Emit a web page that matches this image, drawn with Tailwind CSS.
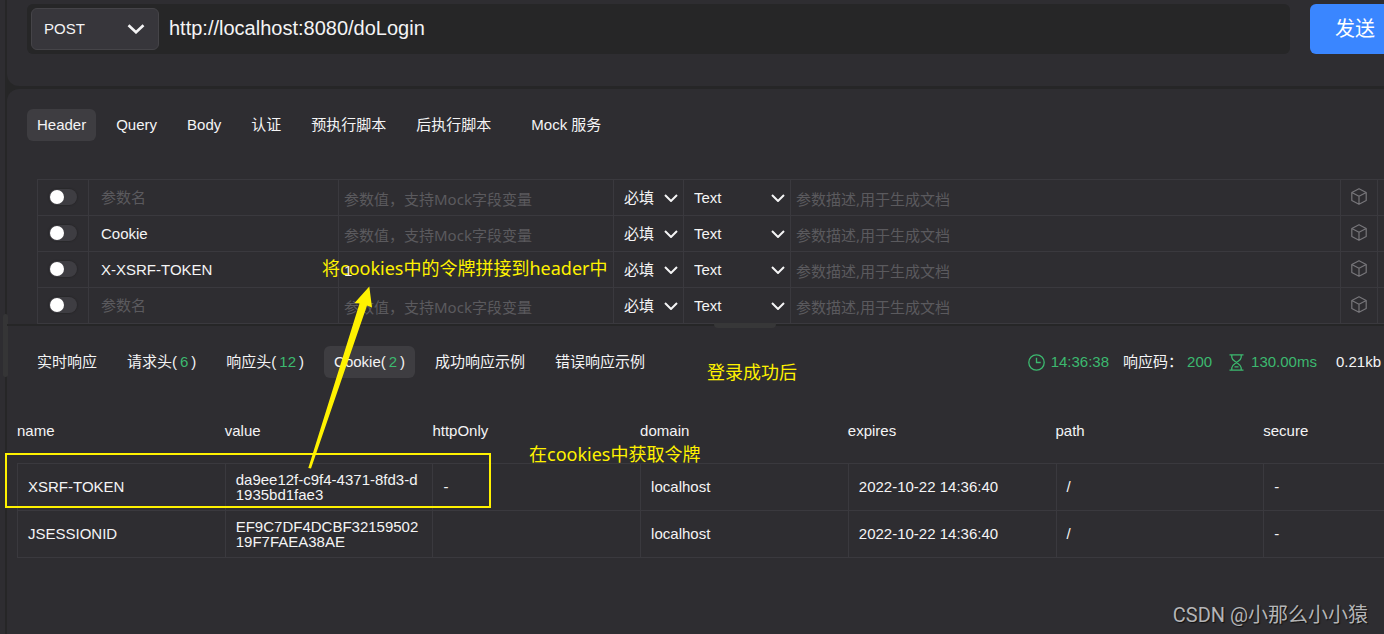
<!DOCTYPE html>
<html lang="zh-CN">
<head>
<meta charset="utf-8">
<meta name="viewport" content="width=device-width, initial-scale=1">
<title>doLogin</title>
<script src="https://cdn.jsdelivr.net/npm/@tailwindcss/browser@4"></script>
</head>
<body class="bg-[#262627] text-[15px] leading-5 text-[#f4f4f5] font-['Liberation_Sans','Noto_Sans_CJK_SC',sans-serif]">
<svg class="hidden" aria-hidden="true">
  <symbol id="chev" viewBox="0 0 14 8"><path d="M1 1l6 6 6-6" fill="none" stroke="currentColor" stroke-width="2"/></symbol>
  <symbol id="cube" viewBox="0 0 16 17"><path d="M8 .7l7.200 3.800v8L8 16.300.8 12.500v-8zM.8 4.500L8 8.200l7.200-3.700M8 8.200v8" fill="none" stroke="currentColor" stroke-width="1.200" stroke-linejoin="round"/></symbol>
</svg>
<div class="relative flex min-h-screen overflow-hidden">
  <div class="w-[5px] shrink-0 bg-[#2e2d31]"></div>
  <div class="absolute left-[3px] top-[314px] h-[63px] w-[5px] rounded-sm bg-[#353536]"></div>
  <div class="ml-[2px] flex min-w-0 flex-1 flex-col gap-[3px]">
    <form class="flex gap-5 rounded-bl-xl bg-[#2e2d31] pt-1 pb-8 pl-5">
      <div class="flex min-w-0 flex-1 rounded-md bg-[#262627] p-1">
        <div class="grid w-32 shrink-0 items-center">
          <select aria-label="请求方法" class="col-start-1 row-start-1 h-[42px] appearance-none rounded-md border border-[#454448] bg-[#37363b] pl-3"><option>POST</option></select>
          <svg class="pointer-events-none col-start-1 row-start-1 mr-[14px] h-[10px] w-[18px] justify-self-end" viewBox="0 0 18 10"><path d="M1.500 1.300L9 8.300l7.500-7" fill="none" stroke="currentColor" stroke-width="2.600"/></svg>
        </div>
        <input aria-label="URL" value="http://localhost:8080/doLogin" class="min-w-0 flex-1 bg-transparent pb-[2px] pl-[10px] text-[20px] outline-none">
      </div>
      <button type="button" class="h-[50px] shrink-0 rounded-l-md bg-[#3a86ff] pr-[9px] pl-[25px] text-[20px] text-white">发送</button>
    </form>

    <main class="flex flex-1 flex-col rounded-tl-xl bg-[#2e2d31]">
      <nav class="flex gap-[10px] px-5 pt-5">
        <button class="h-8 rounded-md bg-[#3e3d41] px-[10px]">Header</button>
        <button class="h-8 px-[10px]">Query</button>
        <button class="h-8 px-[10px]">Body</button>
        <button class="h-8 px-[10px]">认证</button>
        <button class="h-8 px-[10px]">预执行脚本</button>
        <button class="h-8 px-[10px]">后执行脚本</button>
        <button class="ml-[10px] h-8 px-[10px]">Mock 服务</button>
      </nav>

      <div class="mt-[38px] pl-[30px]">
        <table class="w-full table-fixed border-separate border-spacing-0 border-b border-[#3a393e]">
          <colgroup><col class="w-[51px]"><col class="w-[250px]"><col class="w-[275px]"><col class="w-[70px]"><col class="w-[107px]"><col><col class="w-[37px]"><col class="w-[7px]"></colgroup>
          <tbody class="[&_td]:h-9 [&_td]:border-t [&_td]:border-l [&_td]:border-[#3a393e] [&_td]:p-0">
            <tr>
              <td><input type="checkbox" aria-label="启用参数 1" class="mb-[2px] ml-[11px] block h-4 w-7 appearance-none rounded-full bg-[#3e3d42] p-px shadow-[0_0_1px_1px_#29282b] before:block before:size-[14px] before:rounded-full before:bg-white"></td>
              <td><input aria-label="参数名 1" placeholder="参数名" class="block w-full bg-transparent pl-3 outline-none placeholder:text-[#5b5a5e]"></td>
              <td><input aria-label="参数值 1" placeholder="参数值，支持Mock字段变量" class="block w-full bg-transparent pt-[2px] pl-[5px] font-['Noto_Sans','Noto_Sans_CJK_SC',sans-serif] outline-none placeholder:text-[#5b5a5e]"></td>
              <td><div class="grid items-center"><select aria-label="必填 1" class="col-start-1 row-start-1 appearance-none pl-[10px]"><option>必填</option></select><svg class="pointer-events-none col-start-1 row-start-1 mr-[5px] h-2 w-[14px] justify-self-end"><use href="#chev"/></svg></div></td>
              <td><div class="grid items-center"><select aria-label="类型 1" class="col-start-1 row-start-1 appearance-none pl-[10px]"><option>Text</option></select><svg class="pointer-events-none col-start-1 row-start-1 mr-[5px] h-2 w-[14px] justify-self-end"><use href="#chev"/></svg></div></td>
              <td><input aria-label="参数描述 1" placeholder="参数描述,用于生成文档" class="block w-full bg-transparent pt-[2px] pl-[5px] font-['Noto_Sans','Noto_Sans_CJK_SC',sans-serif] outline-none placeholder:text-[#5b5a5e]"></td>
              <td><button aria-label="Mock 1" class="mx-auto mb-[3px] block text-[#77767a]"><svg class="h-[17px] w-4"><use href="#cube"/></svg></button></td>
              <td></td>
            </tr>
            <tr>
              <td><input type="checkbox" aria-label="启用参数 2" class="mb-[2px] ml-[11px] block h-4 w-7 appearance-none rounded-full bg-[#3e3d42] p-px shadow-[0_0_1px_1px_#29282b] before:block before:size-[14px] before:rounded-full before:bg-white"></td>
              <td><input aria-label="参数名 2" value="Cookie" placeholder="参数名" class="block w-full bg-transparent pl-3 outline-none placeholder:text-[#5b5a5e]"></td>
              <td><input aria-label="参数值 2" placeholder="参数值，支持Mock字段变量" class="block w-full bg-transparent pt-[2px] pl-[5px] font-['Noto_Sans','Noto_Sans_CJK_SC',sans-serif] outline-none placeholder:text-[#5b5a5e]"></td>
              <td><div class="grid items-center"><select aria-label="必填 2" class="col-start-1 row-start-1 appearance-none pl-[10px]"><option>必填</option></select><svg class="pointer-events-none col-start-1 row-start-1 mr-[5px] h-2 w-[14px] justify-self-end"><use href="#chev"/></svg></div></td>
              <td><div class="grid items-center"><select aria-label="类型 2" class="col-start-1 row-start-1 appearance-none pl-[10px]"><option>Text</option></select><svg class="pointer-events-none col-start-1 row-start-1 mr-[5px] h-2 w-[14px] justify-self-end"><use href="#chev"/></svg></div></td>
              <td><input aria-label="参数描述 2" placeholder="参数描述,用于生成文档" class="block w-full bg-transparent pt-[2px] pl-[5px] font-['Noto_Sans','Noto_Sans_CJK_SC',sans-serif] outline-none placeholder:text-[#5b5a5e]"></td>
              <td><button aria-label="Mock 2" class="mx-auto mb-[3px] block text-[#77767a]"><svg class="h-[17px] w-4"><use href="#cube"/></svg></button></td>
              <td></td>
            </tr>
            <tr>
              <td><input type="checkbox" aria-label="启用参数 3" class="mb-[2px] ml-[11px] block h-4 w-7 appearance-none rounded-full bg-[#3e3d42] p-px shadow-[0_0_1px_1px_#29282b] before:block before:size-[14px] before:rounded-full before:bg-white"></td>
              <td><input aria-label="参数名 3" value="X-XSRF-TOKEN" placeholder="参数名" class="block w-full bg-transparent pl-3 outline-none placeholder:text-[#5b5a5e]"></td>
              <td><input aria-label="参数值 3" value="1" placeholder="参数值，支持Mock字段变量" class="block w-full bg-transparent pt-[2px] pl-[5px] outline-none placeholder:text-[#5b5a5e]"></td>
              <td><div class="grid items-center"><select aria-label="必填 3" class="col-start-1 row-start-1 appearance-none pl-[10px]"><option>必填</option></select><svg class="pointer-events-none col-start-1 row-start-1 mr-[5px] h-2 w-[14px] justify-self-end"><use href="#chev"/></svg></div></td>
              <td><div class="grid items-center"><select aria-label="类型 3" class="col-start-1 row-start-1 appearance-none pl-[10px]"><option>Text</option></select><svg class="pointer-events-none col-start-1 row-start-1 mr-[5px] h-2 w-[14px] justify-self-end"><use href="#chev"/></svg></div></td>
              <td><input aria-label="参数描述 3" placeholder="参数描述,用于生成文档" class="block w-full bg-transparent pt-[2px] pl-[5px] font-['Noto_Sans','Noto_Sans_CJK_SC',sans-serif] outline-none placeholder:text-[#5b5a5e]"></td>
              <td><button aria-label="Mock 3" class="mx-auto mb-[3px] block text-[#77767a]"><svg class="h-[17px] w-4"><use href="#cube"/></svg></button></td>
              <td></td>
            </tr>
            <tr>
              <td><input type="checkbox" aria-label="启用参数 4" class="mb-[2px] ml-[11px] block h-4 w-7 appearance-none rounded-full bg-[#3e3d42] p-px shadow-[0_0_1px_1px_#29282b] before:block before:size-[14px] before:rounded-full before:bg-white"></td>
              <td><input aria-label="参数名 4" placeholder="参数名" class="block w-full bg-transparent pl-3 outline-none placeholder:text-[#5b5a5e]"></td>
              <td><input aria-label="参数值 4" placeholder="参数值，支持Mock字段变量" class="block w-full bg-transparent pt-[2px] pl-[5px] font-['Noto_Sans','Noto_Sans_CJK_SC',sans-serif] outline-none placeholder:text-[#5b5a5e]"></td>
              <td><div class="grid items-center"><select aria-label="必填 4" class="col-start-1 row-start-1 appearance-none pl-[10px]"><option>必填</option></select><svg class="pointer-events-none col-start-1 row-start-1 mr-[5px] h-2 w-[14px] justify-self-end"><use href="#chev"/></svg></div></td>
              <td><div class="grid items-center"><select aria-label="类型 4" class="col-start-1 row-start-1 appearance-none pl-[10px]"><option>Text</option></select><svg class="pointer-events-none col-start-1 row-start-1 mr-[5px] h-2 w-[14px] justify-self-end"><use href="#chev"/></svg></div></td>
              <td><input aria-label="参数描述 4" placeholder="参数描述,用于生成文档" class="block w-full bg-transparent pt-[2px] pl-[5px] font-['Noto_Sans','Noto_Sans_CJK_SC',sans-serif] outline-none placeholder:text-[#5b5a5e]"></td>
              <td><button aria-label="Mock 4" class="mx-auto mb-[3px] block text-[#77767a]"><svg class="h-[17px] w-4"><use href="#cube"/></svg></button></td>
              <td></td>
            </tr>
          </tbody>
        </table>
      </div>

      <div class="relative h-[2px] bg-[#262627]">
        <div class="absolute -top-px left-[707px] h-[5px] w-[62px] rounded-b-sm bg-[#373738]"></div>
      </div>

      <div class="flex items-center justify-between pt-5 pr-[3px] pl-5 whitespace-nowrap">
        <div class="flex gap-[10px]">
          <button class="h-8 px-[10px]">实时响应</button>
          <button class="h-8 px-[10px]">请求头(<span class="mx-[3px] text-[#3cb96f]">6</span>)</button>
          <button class="h-8 px-[10px]">响应头(<span class="mx-[3px] text-[#3cb96f]">12</span>)</button>
          <button class="h-8 rounded-md bg-[#3e3d41] px-[10px]">Cookie(<span class="mx-[3px] text-[#3cb96f]">2</span>)</button>
          <button class="h-8 px-[10px]">成功响应示例</button>
          <button class="h-8 px-[10px]">错误响应示例</button>
        </div>
        <div class="flex items-center">
          <svg class="mr-[6px] size-[17px] text-[#3cb96f]" viewBox="0 0 17 17" fill="none" stroke="currentColor" stroke-width="1.300"><circle cx="8.500" cy="8.500" r="7.700"/><path d="M8.500 3.800v4.700h4.200"/></svg>
          <span class="mr-[14px] text-[#3cb96f]">14:36:38</span>
          <span class="mr-1">响应码：</span>
          <span class="mr-[17px] text-[#3cb96f]">200</span>
          <svg class="mr-[7px] h-[17px] w-[15px] text-[#3cb96f]" viewBox="0 0 15 17" fill="none" stroke="currentColor" stroke-width="1.300"><path d="M.5.8h14M.5 16.200h14M2.800.8v2.500c0 2.700 2.700 3.700 4.700 5.200 2-1.500 4.700-2.500 4.700-5.200V.8M2.800 16.200v-2.500c0-2.700 2.700-3.700 4.700-5.200 2 1.500 4.700 2.500 4.700 5.200v2.500M5.500 12.800h4"/></svg>
          <span class="mr-[19px] text-[#3cb96f]">130.00ms</span>
          <span>0.21kb</span>
        </div>
      </div>

      <div class="mt-5 overflow-hidden pl-[10px]">
        <table class="w-[1454px] table-fixed border-separate border-spacing-0 border-b border-[#3a393e] text-left">
          <thead>
            <tr class="[&_th]:h-[65px] [&_th]:p-0 [&_th]:font-normal"><th>name</th><th>value</th><th>httpOnly</th><th>domain</th><th>expires</th><th>path</th><th>secure</th></tr>
          </thead>
          <tbody class="[&_td]:h-[47px] [&_td]:border-t [&_td]:border-l [&_td]:border-[#3a393e] [&_td]:px-[10px] [&_td]:pt-0 [&_td]:pb-px [&_td]:leading-[15px] [&_td]:break-all">
            <tr><td>XSRF-TOKEN</td><td>da9ee12f-c9f4-4371-8fd3-d1935bd1fae3</td><td>-</td><td>localhost</td><td>2022-10-22 14:36:40</td><td>/</td><td>-</td></tr>
            <tr><td>JSESSIONID</td><td>EF9C7DF4DCBF3215950219F7FAEA38AE</td><td></td><td>localhost</td><td>2022-10-22 14:36:40</td><td>/</td><td>-</td></tr>
          </tbody>
        </table>
      </div>
    </main>
  </div>

  <!-- Hand-placed notes over the page -->
  <div class="pointer-events-none absolute inset-0 text-[18px] leading-6 whitespace-nowrap text-[#fff200] font-['Noto_Sans','Noto_Sans_CJK_SC',sans-serif]">
    <div class="absolute top-[453px] left-[5px] h-[55px] w-[486px] border-2 border-[#fff200]"></div>
    <svg class="absolute top-[286px] left-[300px] h-[184px] w-20" viewBox="300 286 80 184"><path d="M369.300 286.500L372 307.500 367 305.500 311 468.500 308.300 468 359.500 303.500 354.500 303z" fill="#fff200"/></svg>
    <p class="absolute top-[256px] left-[322px]">将cookies中的令牌拼接到header中</p>
    <p class="absolute top-[360px] left-[707px]">登录成功后</p>
    <p class="absolute top-[442px] left-[529px]">在cookies中获取令牌</p>
  </div>
  <p class="absolute right-4 bottom-[3px] text-[20px] leading-8 text-[#b4b4b6] [text-shadow:1px_1px_1px_#111] font-['Roboto','Noto_Sans_CJK_SC',sans-serif]">CSDN @小那么小小猿</p>
</div>
</body>
</html>
